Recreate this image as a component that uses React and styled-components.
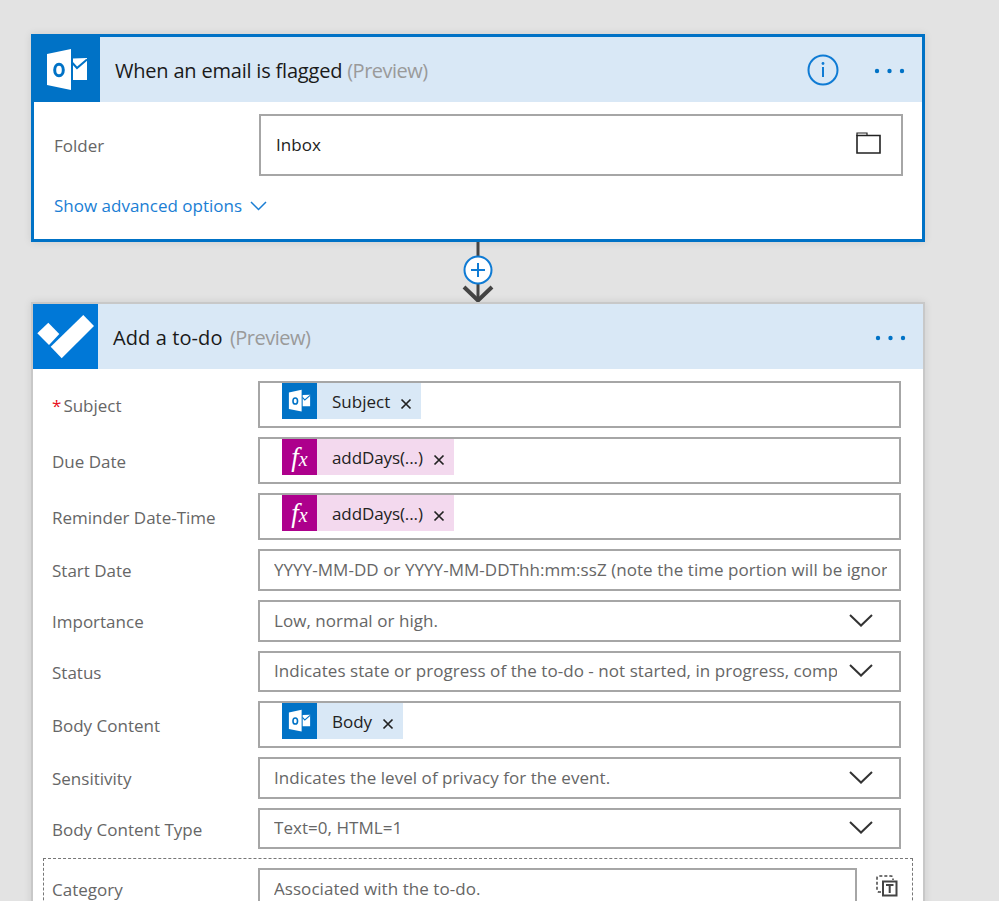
import React from 'react';
import styled, { createGlobalStyle } from 'styled-components';

const GlobalStyle = createGlobalStyle`
  html, body {
    margin: 0;
    height: 901px;
    overflow: hidden;
    background: #e3e3e3;
    font-family: "Open Sans", "Noto Sans", sans-serif;
  }
`;

const Page = styled.div`
  display: flex;
  flex-direction: column;
  width: 894px;
  padding: 34px 0 0 31px;
`;

const Card = styled.section`
  background: #fff;
  box-sizing: border-box;
  border: ${p => (p.$active ? '3px solid #0072c6' : '2px solid #c8c8c8')};
  box-shadow: 0 0 8px rgba(0, 0, 0, 0.1);
`;

const Header = styled.header`
  display: flex;
  align-items: center;
  height: 65px;
  background: #d9e8f6;
`;

const HeaderIcon = styled.div`
  display: flex;
  flex: none;
  width: ${p => (p.$todo ? 65 : 66)}px;
  height: 65px;
  background: ${p => (p.$todo ? '#0078d7' : '#0072c6')};
`;

const Title = styled.h2`
  flex: 1;
  margin: 2px 0 0 15px;
  font-size: 20px;
  font-weight: 400;
  letter-spacing: ${p => (p.$wide ? 0.1 : -0.2)}px;
  color: #1a1a1a;
`;

const Preview = styled.span`
  color: #9a9a9a;
  letter-spacing: -0.5px;
  margin-left: ${p => (p.$wide ? 2 : 0)}px;
`;

const HeaderActions = styled.div`
  display: flex;
  align-items: center;
  gap: 35px;
  padding-right: 16px;
`;

const Dots = styled.svg`
  margin-top: 2px;
`;

const Body = styled.div`
  padding: 12px 22px 0 19px;
`;

const FolderBody = styled.div`
  padding: 12px 19px 22px 20px;
`;

const Row = styled.div`
  display: flex;
  align-items: center;
  margin-bottom: 9px;
`;

const Label = styled.label`
  flex: none;
  width: ${p => p.$w || 206}px;
  padding-top: ${p => (p.$short ? 1 : 2)}px;
  font-size: 17px;
  color: #666;
`;

const Required = styled.span`
  color: #e81123;
  margin-right: 2px;
`;

const Field = styled.div`
  flex: 1;
  display: flex;
  align-items: ${p => (p.$chips ? 'flex-start' : 'center')};
  box-sizing: border-box;
  min-width: 0;
  height: ${p => p.$h}px;
  padding: ${p => (p.$chips ? '0 0 0 22px' : `0 ${p.$pr || 26}px 2px ${p.$pl || 14}px`)};
  border: 2px solid #a6a6a6;
  background: #fff;
`;

const Value = styled.span`
  flex: 1;
  overflow: hidden;
  white-space: nowrap;
  margin-right: ${p => (p.$clip ? 0 : 12)}px;
  font-size: 17px;
  letter-spacing: 0.05px;
  color: ${p => (p.$dark ? '#222' : '#666')};
`;

const Chip = styled.div`
  display: flex;
  align-items: center;
  height: 36px;
  padding-right: 9px;
  background: ${p => (p.$fx ? '#f3d9ee' : '#d9e8f6')};
`;

const ChipIcon = styled.div`
  display: flex;
  align-items: center;
  justify-content: center;
  flex: none;
  width: 35px;
  height: 36px;
  margin-right: 15px;
  background: ${p => (p.$fx ? '#ad008c' : '#0072c6')};
`;

const FxMark = styled.span`
  font-family: "Liberation Serif", serif;
  font-style: italic;
  font-size: 27px;
  color: #fff;
`;

const FxSub = styled.span`
  font-size: 20px;
`;

const ChipText = styled.span`
  font-size: 17px;
  letter-spacing: ${p => (p.$fx ? -0.1 : 0)}px;
  color: #222;
`;

const ChipClose = styled.span`
  display: flex;
  margin-left: 10px;
  padding-top: 5px;
`;

const AdvancedLink = styled.a`
  display: flex;
  align-items: center;
  gap: 8px;
  margin-top: 18px;
  font-size: 17px;
  color: #1a7ed4;
`;

const Connector = styled.div`
  display: flex;
  justify-content: center;
  height: 60px;
`;

const OptionalGroup = styled.div`
  display: flex;
  align-items: center;
  margin: 0 -12px 0 -9px;
  padding: 9px 16px 9px 8px;
  border: 1px dashed #777;
`;

const OptionalField = styled(Field)`
  flex: none;
  width: 599px;
`;

const GroupAction = styled.div`
  display: flex;
  margin-left: 19px;
  margin-top: -7px;
`;

const FolderGlyph = styled.svg`
  flex: none;
  margin-top: -3px;
`;

const Outlook = ({ size }) => (
  <svg width={size} height={size} viewBox="0 0 66 66">
    <path d="M13 17 37 12V53L13 48Z" fill="#fff" />
    <ellipse cx="25" cy="33" rx="4.3" ry="5.8" fill="none" stroke="#0072c6" strokeWidth="3" />
    <path d="M39 21.5 53 21V43H39Z" fill="#fff" />
    <path d="M38.5 26 43 31 53 22.5" fill="none" stroke="#0072c6" strokeWidth="2" />
  </svg>
);

const TodoLogo = () => (
  <svg width="65" height="65" viewBox="0 0 65 65">
    <path d="M4.3 29.3 15.3 18.7 26.3 30 16 41Z" fill="#fff" />
    <path d="M17.7 42.7 50.3 11 61 22 28.7 54.3Z" fill="#fff" />
  </svg>
);

const InfoIcon = () => (
  <svg width="32" height="32" viewBox="0 0 32 32">
    <circle cx="16" cy="16" r="14.5" fill="none" stroke="#0f7bd4" strokeWidth="2" />
    <circle cx="16" cy="9.5" r="1.4" fill="#0f7bd4" />
    <path d="M16 13V23" stroke="#0f7bd4" strokeWidth="2" />
  </svg>
);

const MoreDots = () => (
  <Dots width="32" height="6" viewBox="0 0 32 6">
    <circle cx="3" cy="3" r="2.2" fill="#0072c6" />
    <circle cx="15.5" cy="3" r="2.2" fill="#0072c6" />
    <circle cx="28" cy="3" r="2.2" fill="#0072c6" />
  </Dots>
);

const FolderIcon = () => (
  <FolderGlyph width="25" height="22" viewBox="0 0 25 22">
    <path d="M1 3.5H24V21H1Z" fill="none" stroke="#222" strokeWidth="1.6" />
    <path d="M1 1H11V3.5H1Z" fill="none" stroke="#222" strokeWidth="1.2" />
  </FolderGlyph>
);

const Chevron = ({ w = 24, h = 13, color = '#333', sw = 2 }) => (
  <svg width={w} height={h} viewBox={`0 0 ${w} ${h}`} style={{ flex: 'none' }}>
    <path d={`M1 1 ${w / 2} ${h - 1.5} ${w - 1} 1`} fill="none" stroke={color} strokeWidth={sw} />
  </svg>
);

const CloseIcon = () => (
  <svg width="12" height="12" viewBox="0 0 12 12">
    <path d="M1.5 1.5 10.5 10.5M10.5 1.5 1.5 10.5" stroke="#222" strokeWidth="1.7" />
  </svg>
);

const ConnectorArt = () => (
  <svg width="32" height="60" viewBox="0 0 32 60">
    <path d="M16 0V59" stroke="#444" strokeWidth="3" />
    <path d="M2 45 16 58.5 30 45" fill="none" stroke="#444" strokeWidth="4" />
    <circle cx="16" cy="28" r="13.5" fill="#fff" stroke="#0f7bd4" strokeWidth="2" />
    <path d="M16 21V35M9 28H23" stroke="#0f7bd4" strokeWidth="2" />
  </svg>
);

const StaticResultIcon = () => (
  <svg width="22" height="22" viewBox="0 0 22 22">
    <path d="M5 17H3Q1 17 1 15V3Q1 1 3 1H15Q17 1 17 3V5" fill="none" stroke="#444" strokeWidth="1.5" strokeDasharray="3 2" />
    <path d="M7 6.5H20.5V20.5H7Z" fill="#fff" stroke="#444" strokeWidth="2" />
    <path d="M10 10H17.5M13.7 10V18" stroke="#444" strokeWidth="2" />
  </svg>
);

const OutlookChip = ({ label }) => (
  <Chip>
    <ChipIcon><Outlook size={36} /></ChipIcon>
    <ChipText>{label}</ChipText>
    <ChipClose><CloseIcon /></ChipClose>
  </Chip>
);

const FxChip = () => (
  <Chip $fx>
    <ChipIcon $fx><FxMark>f<FxSub>x</FxSub></FxMark></ChipIcon>
    <ChipText $fx>addDays(...)</ChipText>
    <ChipClose><CloseIcon /></ChipClose>
  </Chip>
);

export default function App() {
  return (
    <Page>
      <GlobalStyle />
      <Card $active>
        <Header>
          <HeaderIcon><Outlook size={66} /></HeaderIcon>
          <Title>When an email is flagged <Preview>(Preview)</Preview></Title>
          <HeaderActions>
            <InfoIcon />
            <MoreDots />
          </HeaderActions>
        </Header>
        <FolderBody>
          <Row>
            <Label $w={205} $short>Folder</Label>
            <Field $h={62} $pr={20} $pl={15}>
              <Value $dark>Inbox</Value>
              <FolderIcon />
            </Field>
          </Row>
          <AdvancedLink>
            Show advanced options
            <Chevron w={17} h={10} color="#1a7ed4" sw={1.5} />
          </AdvancedLink>
        </FolderBody>
      </Card>

      <Connector><ConnectorArt /></Connector>

      <Card>
        <Header>
          <HeaderIcon $todo><TodoLogo /></HeaderIcon>
          <Title $wide>Add a to-do <Preview $wide>(Preview)</Preview></Title>
          <HeaderActions><MoreDots /></HeaderActions>
        </Header>
        <Body>
          <Row>
            <Label><Required>*</Required>Subject</Label>
            <Field $h={47} $chips><OutlookChip label="Subject" /></Field>
          </Row>
          <Row>
            <Label>Due Date</Label>
            <Field $h={47} $chips><FxChip /></Field>
          </Row>
          <Row>
            <Label>Reminder Date-Time</Label>
            <Field $h={47} $chips><FxChip /></Field>
          </Row>
          <Row>
            <Label $short>Start Date</Label>
            <Field $h={42} $pr={12}>
              <Value $clip>YYYY-MM-DD or YYYY-MM-DDThh:mm:ssZ (note the time portion will be ignored)</Value>
            </Field>
          </Row>
          <Row>
            <Label $short>Importance</Label>
            <Field $h={42}><Value>Low, normal or high.</Value><Chevron /></Field>
          </Row>
          <Row>
            <Label $short>Status</Label>
            <Field $h={41}>
              <Value>Indicates state or progress of the to-do - not started, in progress, completed</Value>
              <Chevron />
            </Field>
          </Row>
          <Row>
            <Label>Body Content</Label>
            <Field $h={47} $chips><OutlookChip label="Body" /></Field>
          </Row>
          <Row>
            <Label $short>Sensitivity</Label>
            <Field $h={42}><Value>Indicates the level of privacy for the event.</Value><Chevron /></Field>
          </Row>
          <Row>
            <Label $short>Body Content Type</Label>
            <Field $h={41}><Value>Text=0, HTML=1</Value><Chevron /></Field>
          </Row>
          <OptionalGroup>
            <Label $short>Category</Label>
            <OptionalField $h={42}><Value>Associated with the to-do.</Value></OptionalField>
            <GroupAction><StaticResultIcon /></GroupAction>
          </OptionalGroup>
        </Body>
      </Card>
    </Page>
  );
}
